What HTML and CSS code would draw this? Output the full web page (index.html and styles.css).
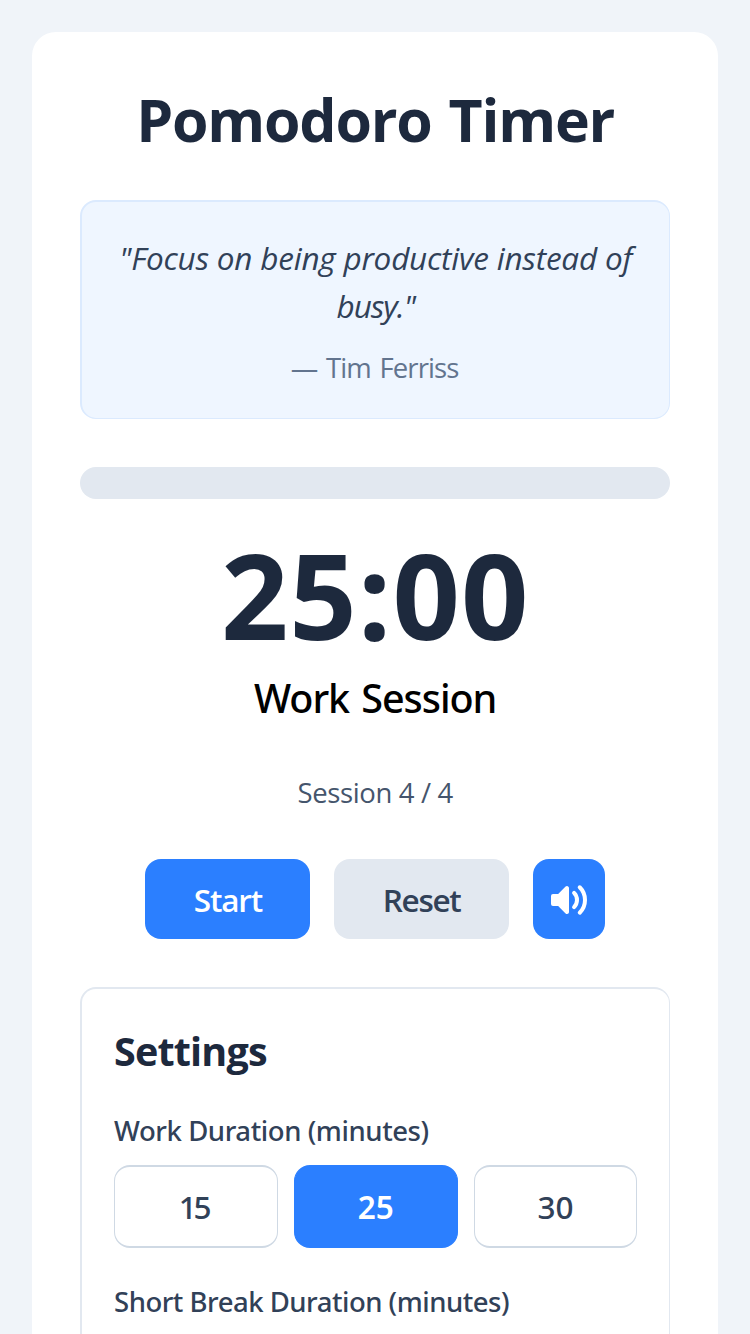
FILE: index.html
```html
<!DOCTYPE html>
<html lang="en">
<head>
<meta charset="utf-8">
<title>Pomodoro Timer</title>
<link rel="stylesheet" href="styles.css">
</head>
<body>
<main class="card">
  <h1 class="title">Pomodoro Timer</h1>
  <section class="quote">
    <p class="quote-text">"Focus on being productive instead of <span class="quote-end">busy."</span></p>
    <p class="quote-author">— Tim Ferriss</p>
  </section>
  <div class="progress"></div>
  <div class="time">25:00</div>
  <div class="mode">Work Session</div>
  <div class="count">Session 4 / 4</div>
  <div class="controls">
    <button class="btn btn-start">Start</button>
    <button class="btn btn-reset">Reset</button>
    <button class="btn btn-sound" aria-label="Toggle sound">
      <svg class="icon" viewBox="0 0 20 20" fill="currentColor"><path fill-rule="evenodd" clip-rule="evenodd" d="M9.383 3.076A1 1 0 0110 4v12a1 1 0 01-1.707.707L4.586 13H2a1 1 0 01-1-1V8a1 1 0 011-1h2.586l3.707-3.707a1 1 0 011.09-.217zM14.657 2.929a1 1 0 011.414 0A9.972 9.972 0 0119 10a9.972 9.972 0 01-2.929 7.071 1 1 0 01-1.414-1.414A7.971 7.971 0 0017 10c0-2.21-.894-4.208-2.343-5.657a1 1 0 010-1.414zm-2.829 2.828a1 1 0 011.415 0A5.983 5.983 0 0115 10a5.984 5.984 0 01-1.757 4.243 1 1 0 01-1.415-1.415A3.984 3.984 0 0013 10a3.983 3.983 0 00-1.172-2.828 1 1 0 010-1.415z"/></svg>
    </button>
  </div>
  <section class="settings">
    <h2 class="settings-title">Settings</h2>
    <div class="label">Work Duration (minutes)</div>
    <div class="options">
      <button class="option option-narrow">15</button>
      <button class="option option-active">25</button>
      <button class="option">30</button>
    </div>
    <div class="label label-short">Short Break Duration (minutes)</div>
  </section>
</main>
</body>
</html>
```
FILE: styles.css
```css
* { box-sizing: border-box; margin: 0; padding: 0; }

body {
  display: flex;
  height: 1334px;
  padding: 32px 31.7px 0 32px;
  background: #f0f4f9;
  font-family: "Open Sans", "Noto Sans", sans-serif;
  color: #1d293d;
}

button { font-family: inherit; border: 0; }

.card {
  display: flex;
  flex: 1;
  flex-direction: column;
  padding: 48px 48px 0;
  border-radius: 24px 24px 0 0;
  background: #fff;
}

.title {
  padding-top: 3px;
  margin-bottom: 45px;
  font-size: 59px;
  line-height: 72px;
  font-weight: 700;
  letter-spacing: -1.25px;
  word-spacing: 3px;
  text-align: center;
}

.quote {
  height: 219px;
  padding: 32px 32px 0;
  border: 1px solid #dbeafe;
  border-width: 2px 1px 1px 2px;
  border-radius: 16px;
  background: #eff6ff;
  text-align: center;
}

.quote-text {
  font-size: 31.5px;
  line-height: 48px;
  font-style: italic;
  letter-spacing: -0.22px;
  color: #314158;
}

.quote-end { letter-spacing: -1px; }

.quote-author {
  margin-top: 18px;
  padding-right: 2px;
  font-size: 27.5px;
  line-height: 40px;
  letter-spacing: -0.9px;
  word-spacing: 2.4px;
  color: #62748e;
}

.progress {
  height: 32px;
  margin-top: 48px;
  border-radius: 16px;
  background: #e2e8f0;
}

.time {
  padding-top: 36px;
  font-size: 118px;
  line-height: 120px;
  font-weight: 700;
  letter-spacing: 1px;
  text-align: center;
}

.mode {
  margin-top: 15px;
  font-family: "Noto Sans", sans-serif;
  font-size: 39.5px;
  line-height: 56px;
  font-weight: 500;
  letter-spacing: -1.05px;
  word-spacing: 3px;
  text-align: center;
  color: #000;
}

.count {
  margin-top: 47px;
  font-size: 27.5px;
  line-height: 40px;
  letter-spacing: -0.36px;
  text-align: center;
  color: #45556c;
}

.controls {
  display: flex;
  justify-content: center;
  gap: 24px;
  margin-top: 46px;
}

.btn {
  height: 80px;
  border-radius: 16px;
  padding-top: 2px;
  font-size: 31.5px;
  line-height: 48px;
  font-weight: 600;
}

.btn-start { width: 165px; background: #2b7fff; color: #fff; letter-spacing: -1.16px; }
.btn-reset { width: 174.5px; background: #e2e8f0; color: #314158; letter-spacing: -1.31px; }

.btn-sound {
  display: flex;
  align-items: center;
  justify-content: center;
  width: 72px;
  background: #2b7fff;
  color: #fff;
}

.icon { width: 40px; height: 40px; }

.settings {
  flex: 1;
  margin-top: 48px;
  padding: 34px 32px 0;
  border: 1px solid #e2e8f0;
  border-width: 2px 1px 0 2px;
  border-radius: 16px 16px 0 0;
}

.settings-title {
  margin-bottom: 32px;
  font-size: 39.5px;
  line-height: 56px;
  font-weight: 700;
  letter-spacing: -0.82px;
}

.label {
  font-family: "Noto Sans", sans-serif;
  font-size: 27.5px;
  line-height: 40px;
  font-weight: 500;
  letter-spacing: -0.42px;
  color: #314158;
}

.label-short { letter-spacing: -0.49px; }

.options {
  display: grid;
  grid-template-columns: repeat(3, 1fr);
  gap: 16px;
  margin: 14px 0 34px;
}

.option {
  height: 83px;
  border: 1px solid #cfd9e4;
  border-width: 2px 1px;
  border-radius: 16px;
  background: #fff;
  font-family: "Noto Sans", sans-serif;
  font-size: 31.5px;
  font-weight: 500;
  color: #314158;
}

.option-narrow { padding-right: 5px; letter-spacing: -3.5px; }
.option-active { border-color: #2b7fff; background: #2b7fff; color: #fff; font-weight: 600; }
```
